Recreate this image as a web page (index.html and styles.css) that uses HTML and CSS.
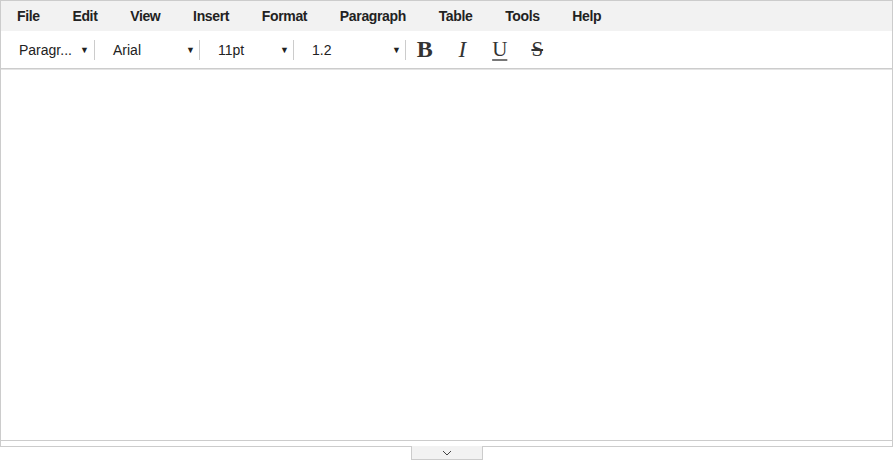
FILE: index.html
```html
<!DOCTYPE html>
<html lang="en">
<head>
    <meta charset="UTF-8">
    <title>Editor</title>
    <link rel="stylesheet" href="styles.css">
</head>
<body>
    <div class="editor">
        <!-- menu -->
        <nav class="menubar">
            <span class="menu-item">File</span>
            <span class="menu-item">Edit</span>
            <span class="menu-item">View</span>
            <span class="menu-item">Insert</span>
            <span class="menu-item">Format</span>
            <span class="menu-item">Paragraph</span>
            <span class="menu-item">Table</span>
            <span class="menu-item">Tools</span>
            <span class="menu-item">Help</span>
        </nav>
        <!-- rīku josla -->
        <div class="toolbar">
            <div class="select select-block"><span class="select-label">Paragr...</span><span class="caret">&#9660;</span></div>
            <div class="select select-font"><span class="select-label">Arial</span><span class="caret">&#9660;</span></div>
            <div class="select select-size"><span class="select-label">11pt</span><span class="caret">&#9660;</span></div>
            <div class="select select-line"><span class="select-label">1.2</span><span class="caret">&#9660;</span></div>
            <div class="buttons">
                <button class="tool tool-b">B</button>
                <button class="tool tool-i">I</button>
                <button class="tool tool-u">U</button>
                <button class="tool tool-s">S</button>
            </div>
        </div>
        <div class="content"></div>
        <div class="statusbar"></div>
    </div>
    <div class="toggle-row">
        <div class="toggle">
            <svg width="10" height="6" viewBox="0 0 10 6"><path d="M1 1 L5 5 L9 1" fill="none" stroke="#444" stroke-width="1"/></svg>
        </div>
    </div>
</body>
</html>
```
FILE: styles.css
```css
body {
    margin: 0;
    font-family: "Liberation Sans", Arial, sans-serif;
    color: #222;
    background: #fff;
}
.editor {
    width: 891px;
    height: 445px;
    border: 1px solid #ccc;
    display: flex;
    flex-direction: column;
}
.menubar {
    height: 30px;
    background: #f2f2f2;
    display: flex;
    align-items: center;
    font-size: 14px;
    font-weight: bold;
    letter-spacing: -0.35px;
}
.menu-item {
    padding: 0 16px 1px 16px;
    margin-right: 0.7px;
}
.toolbar {
    height: 37px;
    display: flex;
    align-items: center;
    padding-left: 9px;
    border-bottom: 1px solid #ccc;
    box-shadow: 0 1px 0 #e4e4e4;
    font-size: 14px;
}
.select {
    height: 20px;
    display: flex;
    align-items: center;
    border-right: 1px solid #ccc;
    padding: 0 4px 0 9px;
    justify-content: space-between;
}
.select-block { width: 70px; padding-right: 5px; }
.select-font { width: 82px; padding-left: 18px; }
.select-size { width: 71px; padding-left: 18px; }
.select-line { width: 89px; padding-left: 18px; }
.caret {
    font-size: 9px;
    color: #222;
}
.buttons {
    display: flex;
}
.tool {
    width: 37.5px;
    height: 30px;
    border: none;
    background: none;
    padding: 0;
    font-family: "Liberation Serif", "Times New Roman", serif;
    font-size: 23px;
    color: #333;
    cursor: pointer;
}
.tool-b { font-weight: bold; font-size: 24px; }
.tool-i { font-style: italic; }
.tool-u { text-decoration: underline; text-decoration-color: #777; text-underline-offset: 3px; font-size: 21px; }
.tool-s { text-decoration: line-through; font-size: 21px; }
.content {
    flex: 1;
    margin-top: 1px;
}
.statusbar {
    height: 5px;
    border-top: 1px solid #ccc;
}
.toggle-row {
    display: flex;
    justify-content: center;
}
.toggle {
    width: 70px;
    height: 13px;
    margin-top: -1px;
    margin-left: -1px;
    background: #f2f2f2;
    border: 1px solid #ccc;
    border-top: none;
    display: flex;
    align-items: center;
    justify-content: center;
}
```
